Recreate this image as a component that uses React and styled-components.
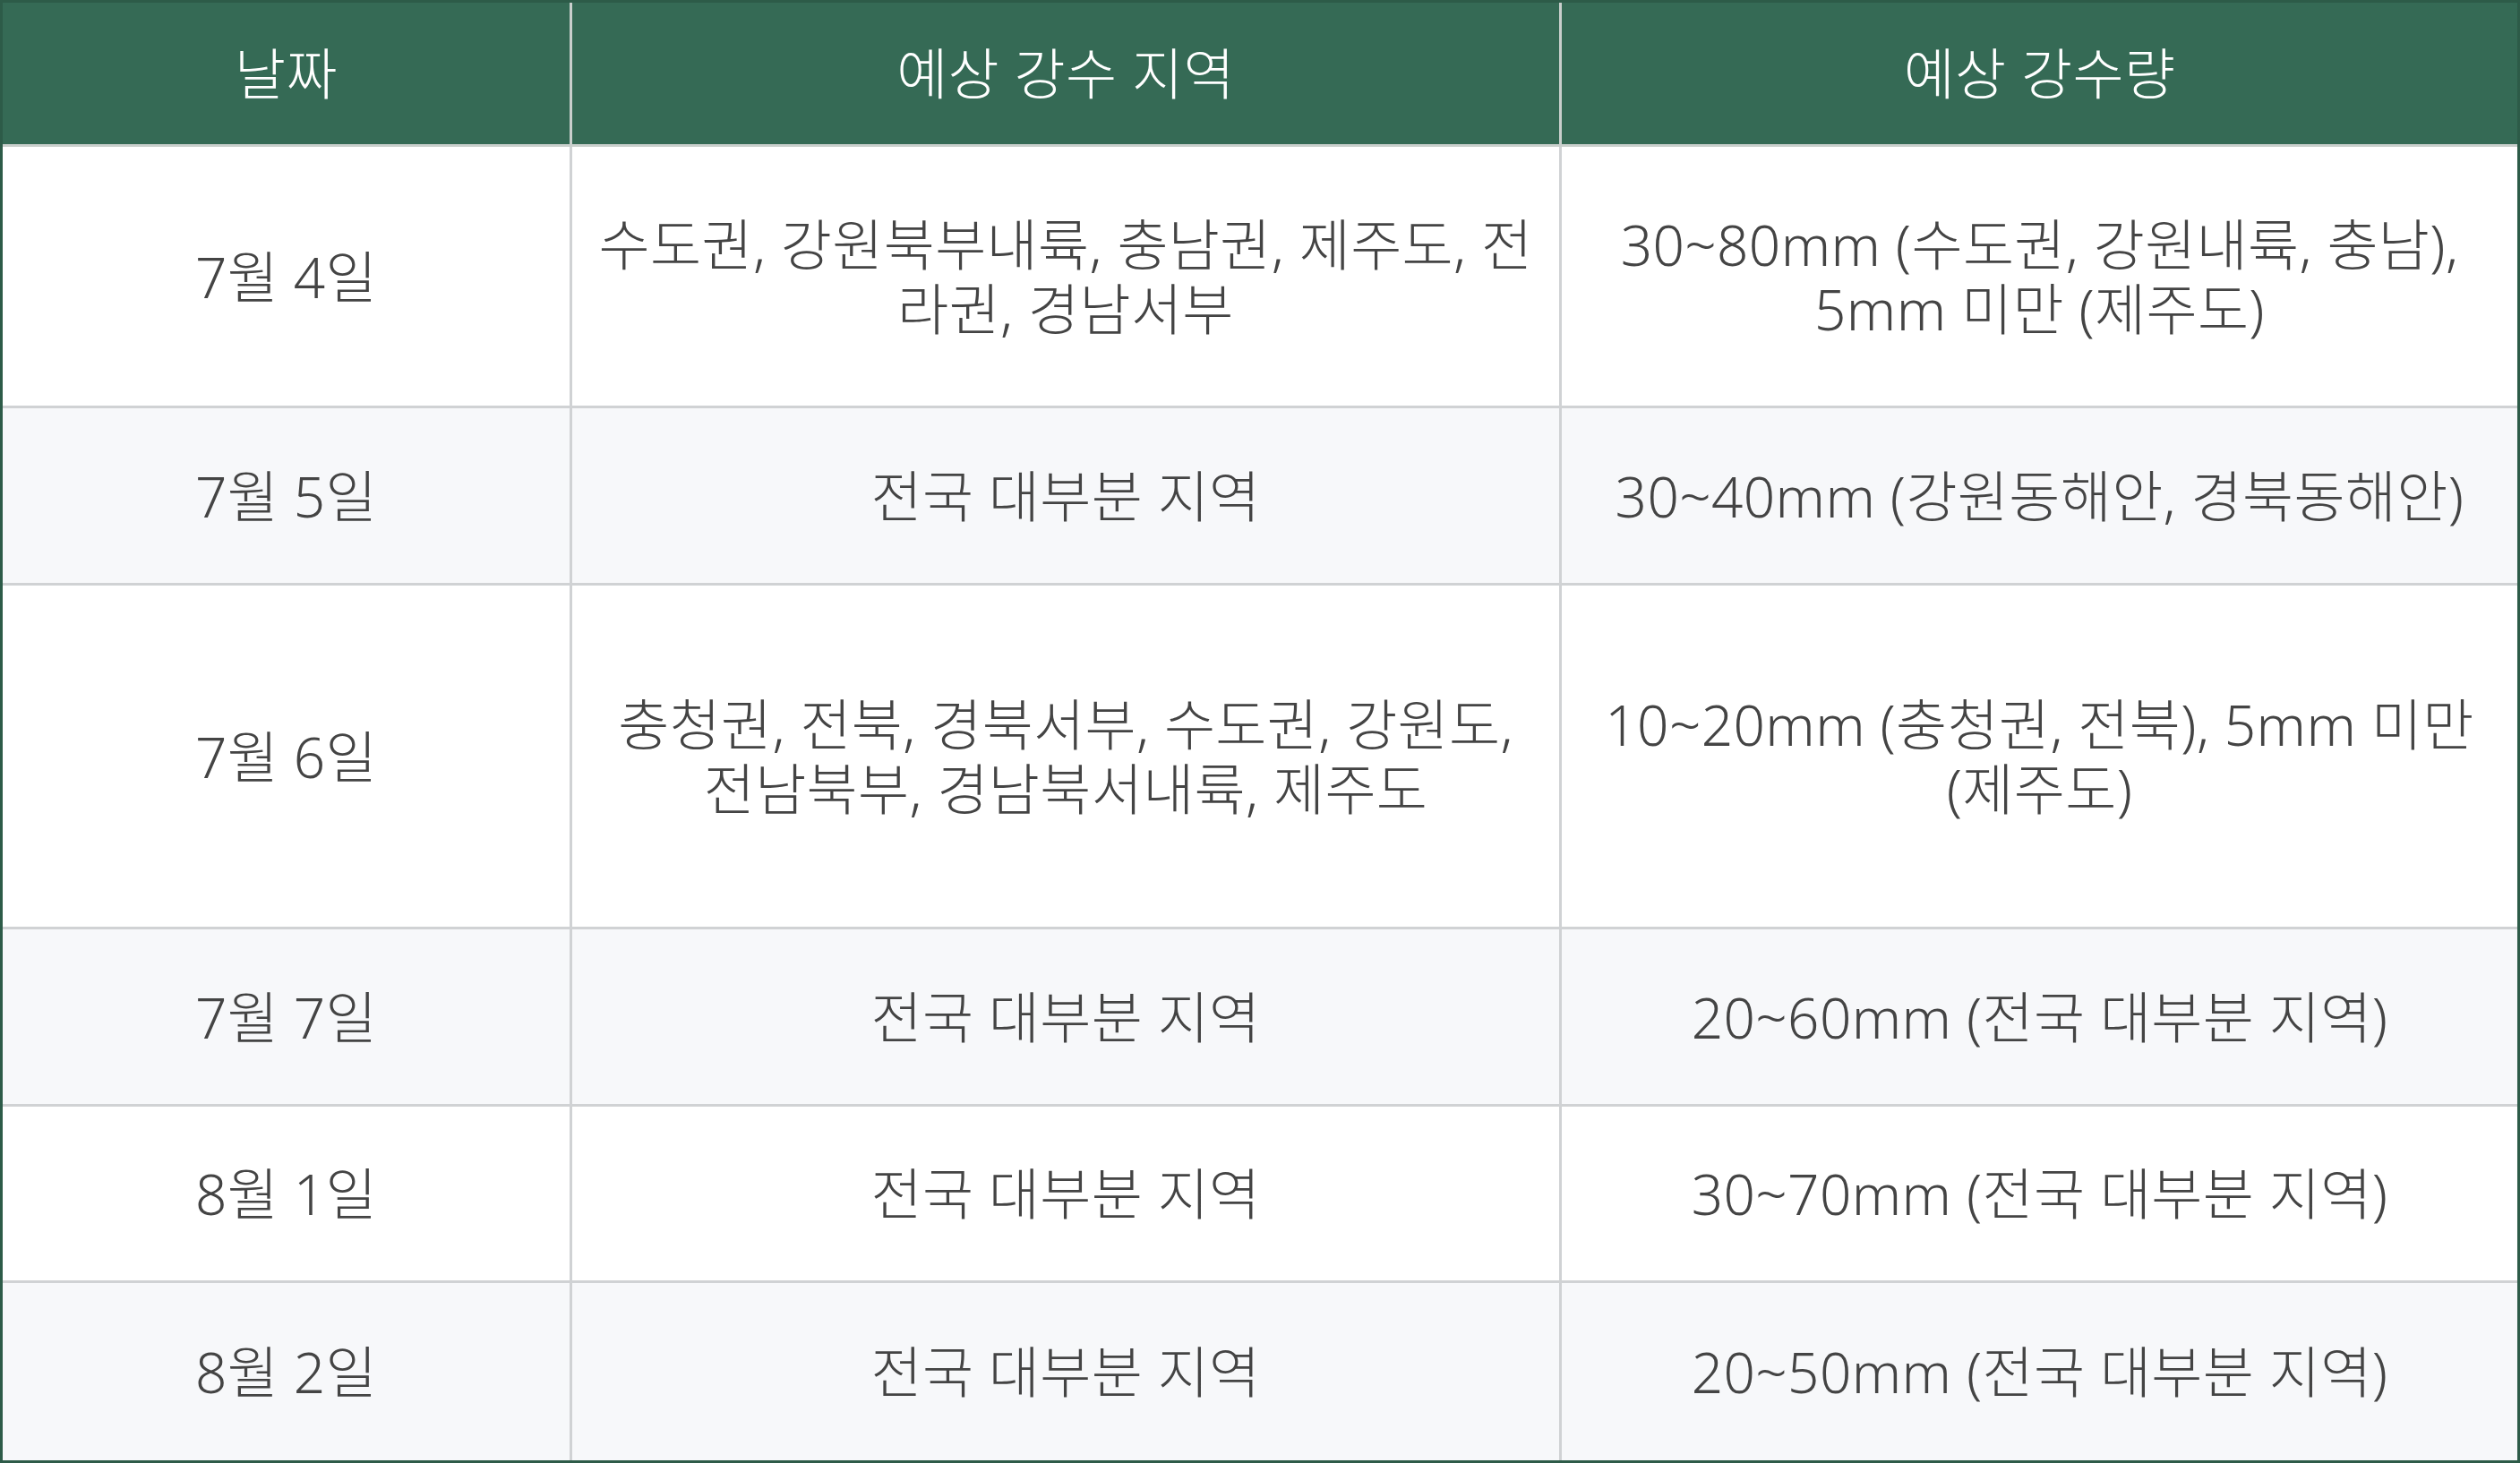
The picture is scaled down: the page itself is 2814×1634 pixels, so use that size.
import React from 'react';
import styled, { createGlobalStyle } from 'styled-components';

const GlobalStyle = createGlobalStyle`
  html, body {
    margin: 0;
    padding: 0;
    background: #ffffff;
  }
  body {
    font-family: "Noto Sans", "Noto Sans CJK KR", sans-serif;
  }
`;

const Table = styled.table`
  width: 2814px;
  table-layout: fixed;
  border-collapse: separate;
  border-spacing: 0;
  border: 3px solid #2d5b48;
  font-size: 62px;
  line-height: 72px;
  letter-spacing: 0.4px;
  font-weight: 300;
`;

const HeadRow = styled.tr`
  height: 161px;
  background: #356a55;
`;

const HeadCell = styled.th`
  padding: 0 20px;
  color: #ffffff;
  font-weight: 300;
  text-align: center;
  border-right: 3px solid #c9cfcc;
  border-bottom: 3px solid #c9cfcc;

  &:last-child {
    border-right: none;
  }
`;

const Row = styled.tr`
  height: ${(p) => p.$h}px;
  background: ${(p) => (p.$alt ? '#f7f8fa' : '#ffffff')};

  &:last-child td {
    border-bottom: none;
  }
`;

const Cell = styled.td`
  padding: 0 20px;
  color: #444444;
  text-align: center;
  vertical-align: middle;
  border-right: 3px solid #d0d2d4;
  border-bottom: 3px solid #d0d2d4;

  &:last-child {
    border-right: none;
  }
`;

const rows = [
  { date: '7월 4일', area: '수도권, 강원북부내륙, 충남권, 제주도, 전라권, 경남서부', amount: '30~80mm (수도권, 강원내륙, 충남), 5mm 미만 (제주도)', h: 292 },
  { date: '7월 5일', area: '전국 대부분 지역', amount: '30~40mm (강원동해안, 경북동해안)', h: 198 },
  { date: '7월 6일', area: '충청권, 전북, 경북서부, 수도권, 강원도, 전남북부, 경남북서내륙, 제주도', amount: '10~20mm (충청권, 전북), 5mm 미만 (제주도)', h: 384 },
  { date: '7월 7일', area: '전국 대부분 지역', amount: '20~60mm (전국 대부분 지역)', h: 198 },
  { date: '8월 1일', area: '전국 대부분 지역', amount: '30~70mm (전국 대부분 지역)', h: 197 },
  { date: '8월 2일', area: '전국 대부분 지역', amount: '20~50mm (전국 대부분 지역)', h: 198 },
];

const App = () => {
  return (
    <>
      <GlobalStyle />
      <Table>
        <colgroup>
          <col style={{ width: 636 }} />
          <col style={{ width: 1105 }} />
          <col />
        </colgroup>
        <thead>
          <HeadRow>
            <HeadCell>날짜</HeadCell>
            <HeadCell>예상 강수 지역</HeadCell>
            <HeadCell>예상 강수량</HeadCell>
          </HeadRow>
        </thead>
        <tbody>
          {rows.map((r, i) => (
            <Row key={r.date} $h={r.h} $alt={i % 2 === 1}>
              <Cell>{r.date}</Cell>
              <Cell>{r.area}</Cell>
              <Cell>{r.amount}</Cell>
            </Row>
          ))}
        </tbody>
      </Table>
    </>
  );
};

export default App;
